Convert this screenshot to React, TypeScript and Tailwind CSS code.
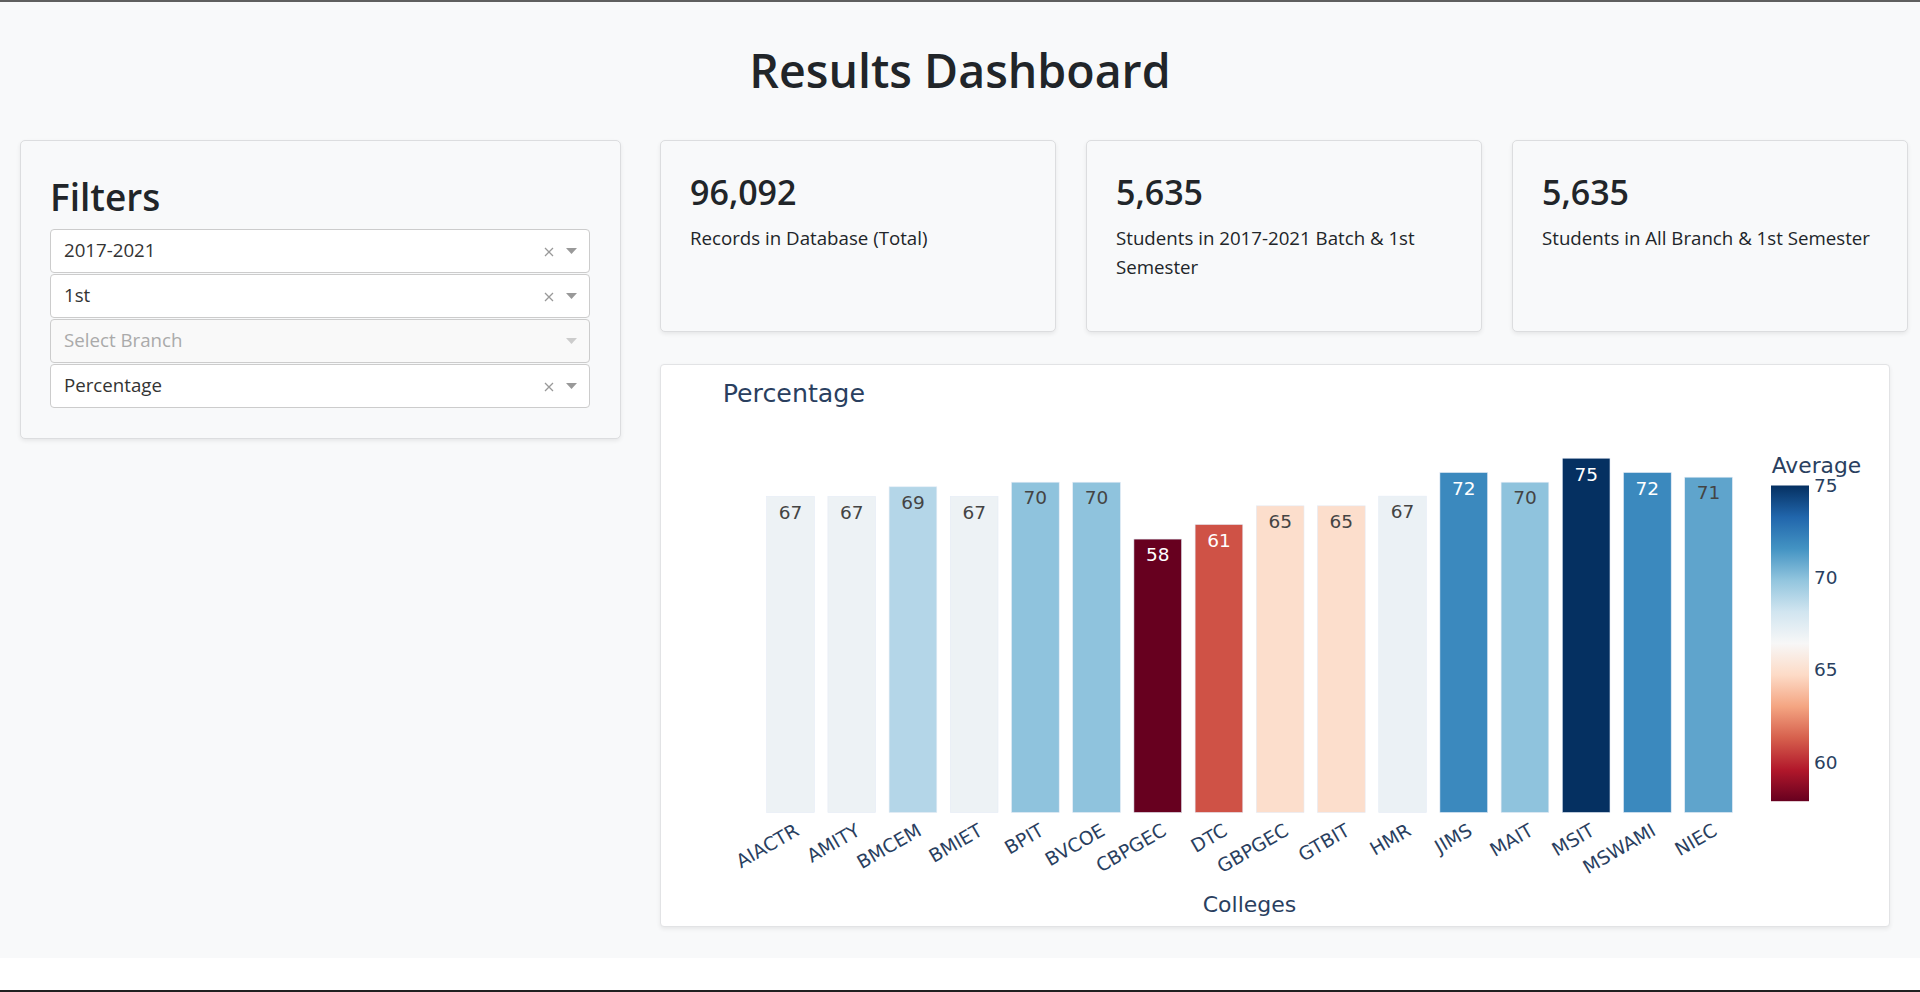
import React from 'react'

const RDBU = [
  [103, 0, 31],
  [178, 24, 43],
  [214, 96, 77],
  [244, 165, 130],
  [253, 219, 199],
  [247, 247, 247],
  [209, 229, 240],
  [146, 197, 222],
  [67, 147, 195],
  [33, 102, 172],
  [5, 48, 97],
]

const CMIN = 57.88
const CMAX = 75.0

function rdbu(v: number) {
  const t = Math.min(1, Math.max(0, (v - CMIN) / (CMAX - CMIN))) * 10
  const i = Math.min(9, Math.floor(t))
  const f = t - i
  const a = RDBU[i]
  const b = RDBU[i + 1]
  const c = a.map((x, k) => Math.round(x + (b[k] - x) * f))
  return `rgb(${c[0]},${c[1]},${c[2]})`
}

const colleges: { name: string; value: number; light?: boolean }[] = [
  { name: 'AIACTR', value: 66.9 },
  { name: 'AMITY', value: 66.9 },
  { name: 'BMCEM', value: 68.95 },
  { name: 'BMIET', value: 66.9 },
  { name: 'BPIT', value: 69.92 },
  { name: 'BVCOE', value: 69.92 },
  { name: 'CBPGEC', value: 57.88, light: true },
  { name: 'DTC', value: 60.97, light: true },
  { name: 'GBPGEC', value: 64.92 },
  { name: 'GTBIT', value: 64.92 },
  { name: 'HMR', value: 66.97 },
  { name: 'JIMS', value: 71.97, light: true },
  { name: 'MAIT', value: 69.92 },
  { name: 'MSIT', value: 75.0, light: true },
  { name: 'MSWAMI', value: 71.97, light: true },
  { name: 'NIEC', value: 70.98 },
]

function Dropdown({ value, placeholder, disabled }: { value?: string; placeholder?: string; disabled?: boolean }) {
  return (
    <div
      className={`h-[44px] flex items-center border border-[#ccc] rounded-[4px] pl-[13px] pr-[12.5px] ${
        disabled ? 'bg-[#f9f9f9]' : 'bg-white'
      }`}
    >
      <span className={`flex-1 text-[18.7px] ${value ? 'text-[#333]' : 'text-[#aaa]'}`}>{value ?? placeholder}</span>
      {!disabled && (
        <svg width="10" height="10" viewBox="0 0 10 10" className="mt-[2px]">
          <path d="M1 1 L9 9 M9 1 L1 9" stroke="#999" strokeWidth="1.3" />
        </svg>
      )}
      <svg width="11" height="6" viewBox="0 0 11 6" className="ml-[12px] mt-[1px]">
        <polygon points="0,0 11,0 5.5,6" fill={disabled ? '#ccc' : '#999'} />
      </svg>
    </div>
  )
}

function StatCard({ num, label }: { num: string; label: string }) {
  return (
    <div className="w-[396px] h-[192px] border border-[#dcdddf] rounded-[5px] bg-[#f8f9fa] shadow-[0_2px_4px_rgba(0,0,0,0.075)] pl-[29px] pr-[29px] pt-[31px]">
      <div className="text-[34px] leading-[40.8px] font-semibold text-[#212529]">{num}</div>
      <div className="mt-[10px] text-[18.7px] leading-[29.5px] text-[#212529]">{label}</div>
    </div>
  )
}

function Chart() {
  const x0 = 105.7
  const step = 61.2
  const bw = 47.7
  const base = 447.5
  const ppu = 4.724
  const cbTop = 120.5
  const cbPpu = 18.44
  const font = "'DejaVu Sans', Verdana, sans-serif"
  return (
    <svg width="1228" height="561" viewBox="0 0 1228 561" fontFamily={font}>
      <defs>
        <linearGradient id="rdbu" x1="0" y1="1" x2="0" y2="0">
          {RDBU.map((c, i) => (
            <stop key={i} offset={i / 10} stopColor={`rgb(${c[0]},${c[1]},${c[2]})`} />
          ))}
        </linearGradient>
      </defs>
      <text x="61.7" y="37.2" fontSize="25.3" fill="#2a3f5f">
        Percentage
      </text>
      {colleges.map((c, i) => {
        const x = x0 + i * step
        const h = c.value * ppu
        const top = base - h
        const cx = x + bw / 2
        return (
          <g key={c.name}>
            <rect x={x} y={top} width={bw} height={h} fill={rdbu(c.value)} stroke="#E5ECF6" strokeWidth="0.6" />
            <text x={cx} y={top + 22.3} fontSize="18.5" textAnchor="middle" fill={c.light ? '#ffffff' : '#444444'}>
              {Math.round(c.value)}
            </text>
            <text
              x={cx + 3}
              y={457.5}
              fontSize="18.8"
              textAnchor="end"
              dominantBaseline="hanging"
              fill="#2a3f5f"
              transform={`rotate(-30 ${cx + 3} 457.5)`}
            >
              {c.name}
            </text>
          </g>
        )
      })}
      <text x="588.5" y="547.2" fontSize="22" textAnchor="middle" fill="#2a3f5f">
        Colleges
      </text>
      <text x="1110.7" y="107.8" fontSize="21.8" fill="#2a3f5f">
        Average
      </text>
      <rect x="1110" y={cbTop} width="38" height={436.2 - cbTop} fill="url(#rdbu)" />
      {[75, 70, 65, 60].map(v => (
        <text key={v} x="1153" y={cbTop + (75 - v) * cbPpu} fontSize="18.5" dominantBaseline="central" fill="#2a3f5f">
          {v}
        </text>
      ))}
    </svg>
  )
}

export default function App() {
  return (
    <div className="w-[1920px] h-[992px] bg-white flex flex-col overflow-hidden font-['Open_Sans',sans-serif] text-[#212529]">
      <div className="h-[2px] bg-[#5f5f5f]" />
      <div className="h-[956px] bg-[#f8f9fa]">
        <h1 className="pt-[40px] text-center text-[46.5px] leading-[57px] font-semibold">Results Dashboard</h1>
        <div className="flex mt-[41px] pl-[20px]">
          <div className="w-[601px] h-[299px] border border-[#dcdddf] rounded-[5px] bg-[#f8f9fa] shadow-[0_2px_4px_rgba(0,0,0,0.075)] pl-[29px] pr-[30px] pt-[32.5px]">
            <h2 className="text-[37px] leading-[45px] font-semibold mb-[10px]">Filters</h2>
            <div className="flex flex-col gap-[1px]">
              <Dropdown value="2017-2021" />
              <Dropdown value="1st" />
              <Dropdown placeholder="Select Branch" disabled />
              <Dropdown value="Percentage" />
            </div>
          </div>
          <div className="ml-[39px] w-[1249px]">
            <div className="flex gap-[30px]">
              <StatCard num="96,092" label="Records in Database (Total)" />
              <StatCard num="5,635" label="Students in 2017-2021 Batch & 1st Semester" />
              <StatCard num="5,635" label="Students in All Branch & 1st Semester" />
            </div>
            <div className="mt-[32px] w-[1230px] h-[563px] border border-[#e2e3e5] rounded-[4px] bg-white shadow-[0_2px_4px_rgba(0,0,0,0.075)]">
              <Chart />
            </div>
          </div>
        </div>
      </div>
      <div className="h-[32px] bg-white" />
      <div className="h-[2px] bg-[#202020]" />
    </div>
  )
}
